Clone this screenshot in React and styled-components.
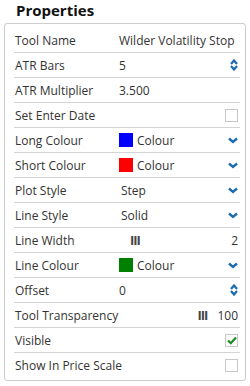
import React from "react"
import styled, { createGlobalStyle } from "styled-components"

const GlobalStyle = createGlobalStyle`
  body {
    margin: 0;
    background: #ffffff;
    font-family: "Open Sans", "Liberation Sans", sans-serif;
  }
`

const colors = {
  text: "#333333",
  line: "#d4d4d4",
  border: "#cccccc",
  accent: "#1c6bb0",
  check: "#1e8c1e",
}

const Page = styled.div`
  width: 250px;
  height: 386px;
  padding: 0 4px;
  box-sizing: border-box;
`

const Title = styled.h2`
  margin: 0;
  padding: 0 0 0 12px;
  height: 23px;
  font-size: 15px;
  line-height: 21px;
  font-weight: 700;
  color: #111111;
`

const Panel = styled.div`
  border: 1px solid ${colors.border};
  border-radius: 3px;
  padding: 4px 5px 2px 9px;
`

const Row = styled.div`
  display: grid;
  grid-template-columns: 104px 1fr 16px;
  align-items: center;
  height: 25px;
  box-sizing: border-box;
  padding-left: 1px;
  border-bottom: ${(p) => (p.$last ? "none" : `1px solid ${colors.line}`)};
  font-size: 12px;
  color: ${colors.text};
`

const Label = styled.span`
  white-space: nowrap;
`

const Value = styled.span`
  display: flex;
  align-items: center;
  gap: 4px;
  white-space: nowrap;
  padding-left: ${(p) => p.$indent || 0}px;
  grid-column: ${(p) => (p.$wide ? "2 / 4" : "auto")};
`

const Control = styled.span`
  display: flex;
  justify-content: flex-end;
  align-items: center;
  padding-right: 2px;
`

const Swatch = styled.span`
  width: 14px;
  height: 14px;
  background: ${(p) => p.$color};
`

const Bars = styled.span`
  font-weight: 700;
  font-size: 13px;
  letter-spacing: -1px;
  color: #444444;
`

const SliderValue = styled.span`
  display: flex;
  align-items: center;
  justify-content: ${(p) => (p.$start ? "space-between" : "flex-end")};
  gap: 10px;
  grid-column: 2 / 4;
  padding-right: 2px;
  padding-left: ${(p) => p.$indent || 0}px;
`

const Checkbox = styled.span`
  width: 11px;
  height: 11px;
  border: 1px solid #c8c8c8;
  display: flex;
  align-items: center;
  justify-content: center;
`

const Chevron = () => (
  <svg width="10" height="7" viewBox="0 0 10 7">
    <path d="M1 1.5 L5 5 L9 1.5" fill="none" stroke={colors.accent} strokeWidth="2.4" />
  </svg>
)

const Spinner = () => (
  <svg width="8" height="12" viewBox="0 0 8 12">
    <path d="M1 5 L4 1.5 L7 5" fill="none" stroke={colors.accent} strokeWidth="2.2" />
    <path d="M1 7 L4 10.5 L7 7" fill="none" stroke={colors.accent} strokeWidth="2.2" />
  </svg>
)

const Tick = () => (
  <svg width="10" height="9" viewBox="0 0 10 9">
    <path d="M1 4.5 L3.8 7.2 L9 1.5" fill="none" stroke={colors.check} strokeWidth="2.2" />
  </svg>
)

const ColourValue = ({ color }) => (
  <>
    <Value>
      <Swatch $color={color} />
      Colour
    </Value>
    <Control>
      <Chevron />
    </Control>
  </>
)

const App = () => (
  <Page>
    <GlobalStyle />
    <Title>Properties</Title>
    <Panel>
      <Row>
        <Label>Tool Name</Label>
        <Value $wide>Wilder Volatility Stop</Value>
      </Row>
      <Row>
        <Label>ATR Bars</Label>
        <Value>5</Value>
        <Control>
          <Spinner />
        </Control>
      </Row>
      <Row>
        <Label>ATR Multiplier</Label>
        <Value $wide>3.500</Value>
      </Row>
      <Row>
        <Label>Set Enter Date</Label>
        <Value />
        <Control>
          <Checkbox />
        </Control>
      </Row>
      <Row>
        <Label>Long Colour</Label>
        <ColourValue color="#0000ff" />
      </Row>
      <Row>
        <Label>Short Colour</Label>
        <ColourValue color="#ff0000" />
      </Row>
      <Row>
        <Label>Plot Style</Label>
        <Value $indent={2}>Step</Value>
        <Control>
          <Chevron />
        </Control>
      </Row>
      <Row>
        <Label>Line Style</Label>
        <Value $indent={2}>Solid</Value>
        <Control>
          <Chevron />
        </Control>
      </Row>
      <Row>
        <Label>Line Width</Label>
        <SliderValue $start $indent={11}>
          <Bars>III</Bars>
          <span>2</span>
        </SliderValue>
      </Row>
      <Row>
        <Label>Line Colour</Label>
        <ColourValue color="#008000" />
      </Row>
      <Row>
        <Label>Offset</Label>
        <Value>0</Value>
        <Control>
          <Spinner />
        </Control>
      </Row>
      <Row>
        <Label>Tool Transparency</Label>
        <SliderValue>
          <Bars>III</Bars>
          <span>100</span>
        </SliderValue>
      </Row>
      <Row>
        <Label>Visible</Label>
        <Value />
        <Control>
          <Checkbox>
            <Tick />
          </Checkbox>
        </Control>
      </Row>
      <Row $last>
        <Label>Show In Price Scale</Label>
        <Value />
        <Control>
          <Checkbox />
        </Control>
      </Row>
    </Panel>
  </Page>
)

export default App
